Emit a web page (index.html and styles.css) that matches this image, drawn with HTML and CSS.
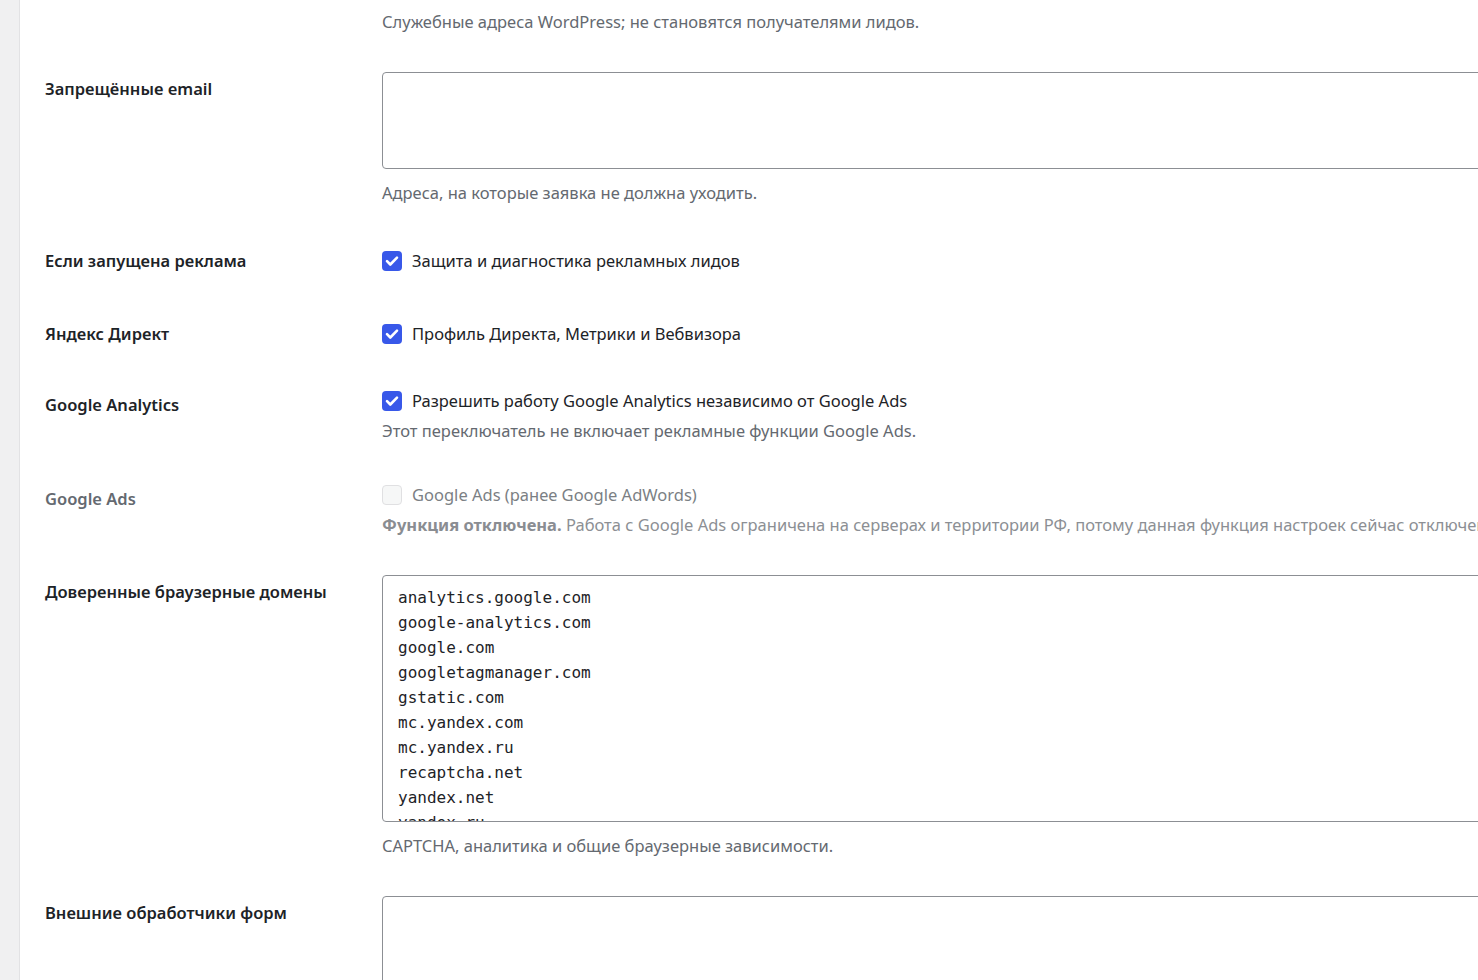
FILE: index.html
```html
<!DOCTYPE html>
<html lang="ru">
<head>
    <meta charset="UTF-8">
    <meta name="viewport" content="width=device-width, initial-scale=1.0">
    <title>Настройки заявок</title>
    <link rel="stylesheet" href="styles.css">
</head>
<body>

    <div class="wrap">
        <form class="settings">

            <!-- tail of the previous field -->
            <div class="row row-first">
                <div class="label"></div>
                <div class="field">
                    <p class="description">Служебные адреса WordPress; не становятся получателями лидов.</p>
                </div>
            </div>

            <div class="row">
                <div class="label">Запрещённые email</div>
                <div class="field">
                    <textarea class="box box-short"></textarea>
                    <p class="description">Адреса, на которые заявка не должна уходить.</p>
                </div>
            </div>

            <div class="row row-ads">
                <div class="label label-inline">Если запущена реклама</div>
                <div class="field">
                    <label class="check">
                        <span class="tick">
                            <svg viewBox="0 0 20 20"><path d="M5 10.2l3.3 3.3L15 6.6" /></svg>
                        </span>
                        Защита и диагностика рекламных лидов
                    </label>
                </div>
            </div>

            <div class="row row-direct">
                <div class="label label-inline">Яндекс Директ</div>
                <div class="field">
                    <label class="check">
                        <span class="tick">
                            <svg viewBox="0 0 20 20"><path d="M5 10.2l3.3 3.3L15 6.6" /></svg>
                        </span>
                        Профиль Директа, Метрики и Вебвизора
                    </label>
                </div>
            </div>

            <div class="row row-analytics">
                <div class="label">Google Analytics</div>
                <div class="field">
                    <label class="check">
                        <span class="tick">
                            <svg viewBox="0 0 20 20"><path d="M5 10.2l3.3 3.3L15 6.6" /></svg>
                        </span>
                        Разрешить работу Google Analytics независимо от Google Ads
                    </label>
                    <p class="description description-near">Этот переключатель не включает рекламные функции Google Ads.</p>
                </div>
            </div>

            <div class="row row-disabled">
                <div class="label">Google Ads</div>
                <div class="field">
                    <label class="check">
                        <span class="tick tick-off"></span>
                        Google Ads (ранее Google AdWords)
                    </label>
                    <p class="description description-near"><b>Функция отключена.</b> Работа с Google Ads ограничена на серверах и территории РФ, потому данная функция настроек сейчас отключена.</p>
                </div>
            </div>

            <div class="row">
                <div class="label">Доверенные браузерные домены</div>
                <div class="field">
                    <textarea class="box box-tall code" spellcheck="false">analytics.google.com
google-analytics.com
google.com
googletagmanager.com
gstatic.com
mc.yandex.com
mc.yandex.ru
recaptcha.net
yandex.net
yandex.ru
yastatic.net</textarea>
                    <p class="description">CAPTCHA, аналитика и общие браузерные зависимости.</p>
                </div>
            </div>

            <div class="row row-last">
                <div class="label">Внешние обработчики форм</div>
                <div class="field">
                    <textarea class="box box-short"></textarea>
                </div>
            </div>

        </form>
    </div>

</body>
</html>
```

FILE: styles.css
```css
body {
    font-family: 'Noto Sans', 'Open Sans', sans-serif;
    background-color: #f0f0f1;
    margin: 0;
    padding: 0;
    height: 100vh;
    overflow: hidden;
    color: #1d2327;
}

/* White settings panel next to the admin menu edge */
.wrap {
    margin-left: 19px;
    border-left: 1px solid #e2e2e4;
    background-color: #fff;
    height: 100%;
    padding: 10px 0 0 25px;
    overflow: hidden;
}

.settings {
    display: flex;
    flex-direction: column;
}

/* One setting: label column + field column */
.row {
    display: grid;
    grid-template-columns: 337px 1fr;
    padding: 19px 0;
}

.row-first {
    padding-top: 0;
}

.row-ads {
    padding-top: 25px;
    padding-bottom: 19px;
}

.row-direct {
    padding-top: 30px;
}

.row-analytics {
    padding-top: 24px;
}

.row-disabled {
    padding-top: 21px;
}

.label {
    font-size: 16.5px;
    font-weight: 600;
    line-height: 24px;
    padding-top: 5px;
    color: #1d2327;
    white-space: nowrap;
}

.label-inline {
    padding-top: 0;
}

.row-analytics .label,
.row-disabled .label {
    padding-top: 4px;
}

.row-disabled .label {
    color: #646970;
}

.field {
    min-width: 0;
}

.description {
    margin: 12px 0 0;
    font-size: 16.5px;
    line-height: 24px;
    color: #646970;
    white-space: nowrap;
}

.row-first .description {
    margin-top: 0;
}

.description-near {
    margin-top: 6px;
}

/* Text areas run past the right edge of the window */
.box {
    display: block;
    box-sizing: border-box;
    width: 1200px;
    margin: 0;
    border: 1px solid #8c8f94;
    border-radius: 4px;
    background-color: #fff;
    resize: none;
    outline: none;
    font-family: 'Noto Sans', sans-serif;
}

.box-short {
    height: 97px;
}

.box-tall {
    height: 247px;
}

.code {
    font-family: 'DejaVu Sans Mono', 'Liberation Mono', monospace;
    font-size: 16px;
    line-height: 25px;
    padding: 9px 15px;
    color: #1d2327;
    overflow: hidden;
}

/* Checkbox lines */
.check {
    display: flex;
    align-items: center;
    gap: 10px;
    font-size: 16.5px;
    line-height: 24px;
    color: #1d2327;
    white-space: nowrap;
}

.tick {
    width: 20px;
    height: 20px;
    box-sizing: border-box;
    border-radius: 4px;
    background-color: #3858e9;
    display: flex;
    align-items: center;
    justify-content: center;
    flex-shrink: 0;
}

.tick svg {
    width: 20px;
    height: 20px;
    fill: none;
    stroke: #fff;
    stroke-width: 2.6;
    stroke-linecap: round;
    stroke-linejoin: round;
}

.tick-off {
    background-color: #f6f7f7;
    border: 1px solid #e0e0e2;
}

.row-disabled .check {
    color: #7b7f84;
}

.row-disabled .description {
    color: #8c8f94;
}

.row-disabled .description b {
    color: #8a8d92;
}
```
